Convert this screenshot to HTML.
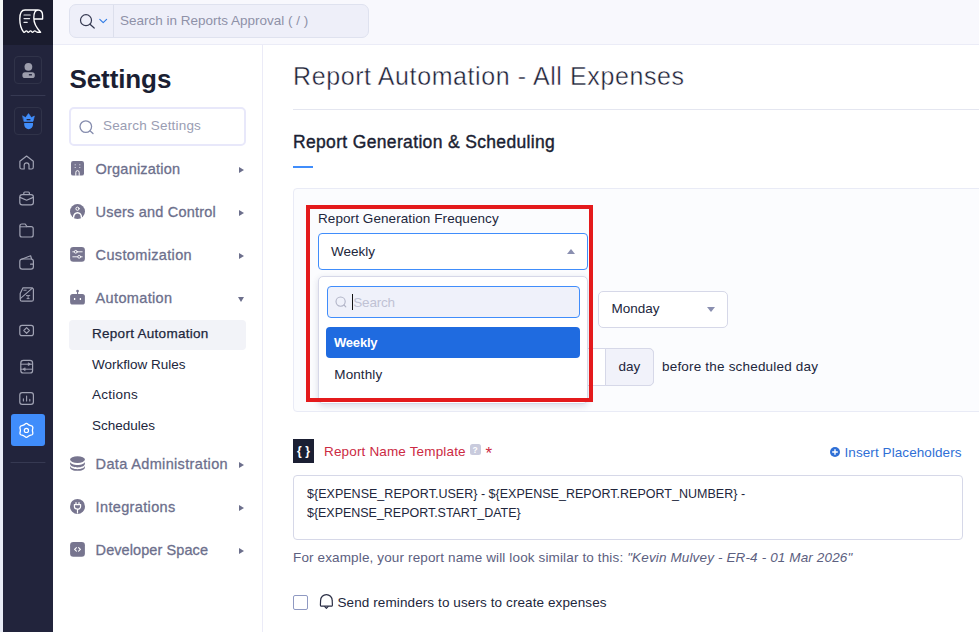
<!DOCTYPE html>
<html lang="en">
<head>
<meta charset="utf-8">
<title>Report Automation - All Expenses</title>
<style>
*{box-sizing:border-box;margin:0;padding:0}
html,body{width:979px;height:632px;overflow:hidden;background:#fff}
body{font-family:"Liberation Sans",Arial,sans-serif;color:#21263c;position:relative;font-size:13px}
.abs{position:absolute}
.t{position:absolute;white-space:nowrap;line-height:1}
#edge{left:0;top:0;width:3px;height:632px;background:#e9ecf6;border-top:20px solid #f6f9f7}
#nav{left:3px;top:0;width:50px;height:632px;background:#22243c}
#navtop{left:3px;top:0;width:50px;height:45px;background:#1a1c2e}
#topbar{left:53px;top:0;width:926px;height:45px;background:#f8f8fd;border-bottom:1px solid #ebecf7}
#gsearch{left:69px;top:4px;width:300px;height:34px;background:#eeeff9;border:1px solid #dfe2ef;border-radius:7px}
#gsearch .div{position:absolute;left:43px;top:0;width:1px;height:32px;background:#dcdfec}
#side{left:53px;top:45px;width:210px;height:587px;background:#fff;border-right:1px solid #ebebf7}
.mi{color:#6c6f8c;font-size:14.5px;font-weight:400;letter-spacing:.35px;-webkit-text-stroke:.3px #6c6f8c}
.si{color:#21263c;font-size:13.5px}
.arr{position:absolute;width:0;height:0;border-left:5px solid #6c6f8c;border-top:3.5px solid transparent;border-bottom:3.5px solid transparent}
.arrd{position:absolute;width:0;height:0;border-top:5px solid #6c6f8c;border-left:3.5px solid transparent;border-right:3.5px solid transparent}
.ico{position:absolute;width:15px;height:15px}
</style>
</head>
<body>
<div id="edge" class="abs"></div>
<div id="nav" class="abs"></div>
<div id="navtop" class="abs"></div>
<div id="topbar" class="abs"></div>
<div id="gsearch" class="abs"><div class="div"></div></div>
<div class="t" style="left:120px;top:14px;font-size:13.5px;color:#8e91a8">Search in Reports Approval ( / )</div>

<div id="side" class="abs"></div>
<div class="t" style="left:69.5px;top:66px;font-size:26px;font-weight:700;color:#1b1f33;letter-spacing:-.1px">Settings</div>
<div class="abs" style="left:69px;top:107px;width:177px;height:38.5px;border:2px solid #e8e8fa;border-radius:5px;background:#fff"></div>
<div class="t" style="left:103px;top:119px;font-size:13.5px;color:#9a9db3;letter-spacing:.18px">Search Settings</div>

<div class="t mi" style="left:95.6px;top:162px;letter-spacing:.2px">Organization</div>
<div class="t mi" style="left:95.6px;top:205px;letter-spacing:.2px">Users and Control</div>
<div class="t mi" style="left:95.6px;top:248px">Customization</div>
<div class="t mi" style="left:95.6px;top:291px">Automation</div>
<div class="abs" style="left:69px;top:320px;width:177px;height:30px;background:#f2f3f8;border-radius:4px"></div>
<div class="t si" style="left:92px;top:327px;letter-spacing:.28px;-webkit-text-stroke:.25px #21263c">Report Automation</div>
<div class="t si" style="left:92px;top:358px">Workflow Rules</div>
<div class="t si" style="left:92px;top:388px;letter-spacing:.25px">Actions</div>
<div class="t si" style="left:92px;top:419px">Schedules</div>
<div class="t mi" style="left:95.6px;top:457px">Data Administration</div>
<div class="t mi" style="left:95.6px;top:500px">Integrations</div>
<div class="t mi" style="left:95.6px;top:543px;letter-spacing:.08px">Developer Space</div>
<div class="arr" style="left:239px;top:167px"></div>
<div class="arr" style="left:239px;top:210px"></div>
<div class="arr" style="left:239px;top:253px"></div>
<div class="arrd" style="left:238px;top:297px"></div>
<div class="arr" style="left:239px;top:462px"></div>
<div class="arr" style="left:239px;top:505px"></div>
<div class="arr" style="left:239px;top:548px"></div>


<!-- NAV ICONS -->
<svg class="abs" style="left:3px;top:0" width="50" height="632" viewBox="3 0 50 632" fill="none" stroke-linecap="round" stroke-linejoin="round">
<!-- logo -->
<g stroke="#fff" stroke-width="1.4">
<path d="M38 10 H25 C21.2 10 19.8 14.5 19.8 19 C19.8 24.5 21.4 29.2 23.6 32.2 Q24.6 32.6 25.4 31.4 Q26.4 30.2 27.4 31.6 Q28.4 33 29.6 31.4 Q30.6 30.2 31.6 31.6 Q32.6 33 33.8 31.4 Q34.8 30.2 35.8 31.4 Q36.6 32.4 38 32.2 H40.6 C37 28.5 33.8 24 33.8 18 C33.8 13 35.5 10 38 10 C41 10 42.6 12.5 42.6 15.5 V19 H34.2" stroke-width="1.35"/>
<path d="M24 15H30.2M24 18.6H29.6M24 22.4H27.2" stroke-width="1.15" stroke="#e4e5ea"/>
</g>
<!-- user box -->
<rect x="14.5" y="56.5" width="27" height="27" rx="3.5" stroke="#303349" stroke-width="1"/>
<circle cx="28.4" cy="66.8" r="3.9" fill="#9c9dac" stroke="none"/>
<rect x="22.4" y="72.3" width="12.4" height="5.8" rx="2.6" fill="#9c9dac" stroke="none"/>
<rect x="28.8" y="73.9" width="3.2" height="1.7" rx=".5" fill="#2a2c44" stroke="none"/>
<path d="M11 95.5H45M11 462.5H45" stroke="#363952" stroke-width="1"/>
<!-- admin box -->
<rect x="14.5" y="107.5" width="27" height="27" rx="3.5" stroke="#303349" stroke-width="1"/>
<path d="M22.8 116 L25.6 117.6 L28.5 113.6 L31.4 117.6 L34.4 116 L33 121.4 H24.2 Z" fill="#408dfb" stroke="#408dfb" stroke-width=".6"/>
<path d="M24.2 122.9 H33 V124.6 A4.4 4.6 0 0 1 24.2 124.6 Z" fill="#408dfb" stroke="none"/>
<rect x="26.6" y="119" width="3.8" height="1.3" fill="#22243c" stroke="none"/>
<g stroke="#a1a3b4" stroke-width="1.2">
<!-- home -->
<path d="M19.9 161.2 L26.6 156 L33.3 161.2 V167.2 A1.8 1.8 0 0 1 31.5 169 H29 V165.2 A2.4 2.4 0 0 0 24.2 165.2 V169 H21.7 A1.8 1.8 0 0 1 19.9 167.2 Z"/>
<!-- briefcase -->
<rect x="19.8" y="194.6" width="13.6" height="10.2" rx="2.4"/>
<path d="M23.8 194.4 V193 A1 1 0 0 1 24.8 192 H28.4 A1 1 0 0 1 29.4 193 V194.4"/>
<path d="M20 197.4 L26.6 200.2 L33.2 197.4"/>
<!-- folder -->
<path d="M19.9 226 A2 2 0 0 1 21.9 224 H25.2 L27 226.6 H31.2 A2 2 0 0 1 33.2 228.6 V235 A2 2 0 0 1 31.2 237 H21.9 A2 2 0 0 1 19.9 235 Z"/>
<path d="M20.2 226.8 H26.6" stroke-width="1"/>
<!-- wallet -->
<rect x="19.8" y="259" width="13.6" height="10.2" rx="2.4"/>
<path d="M21.6 259.2 L30.6 255.8 L31.6 259"/>
<path d="M33.4 264.2 H30.6" />
<!-- trips -->
<path d="M23 287.8 H31.6 A1.8 1.8 0 0 1 33.4 289.6 V299.4 A1.8 1.8 0 0 1 31.6 301.2 H22 A1.8 1.8 0 0 1 20.2 299.4 V293.4 Z"/>
<path d="M20.6 298.4 L32.4 288.2" stroke-width="1.1"/>
<path d="M23.8 290.2H26.2" stroke-width="1"/>
<path d="M26.4 295.6H29.8M28.1 295.8V298.4M27 298.6H29.2" stroke-width=".9"/>
<!-- card diamond -->
<rect x="19.8" y="325.4" width="13.6" height="10.2" rx="2.2"/>
<path d="M26.6 327.6 L29.4 330.5 L26.6 333.4 L23.8 330.5 Z" stroke-width="1.1"/>
<!-- arrows -->
<rect x="20.8" y="360.4" width="11.8" height="12.6" rx="2.6"/>
<path d="M21 364.2 H32.4 M21 369.2 H32.4" stroke-width="1"/>
<path d="M28.6 363 L30.4 364.2 L28.6 365.4 Z M24.8 368 L23 369.2 L24.8 370.4 Z" fill="#a1a3b4" stroke-width=".8"/>
<!-- chart -->
<rect x="19.8" y="392.6" width="13.6" height="11.8" rx="2.4"/>
<path d="M23.4 398.8V401M26.6 396V401M29.8 399.4V401" stroke-width="1.1"/>
</g>
<!-- settings active -->
<rect x="11" y="414" width="34" height="32" rx="3" fill="#408dfb" stroke="none"/>
<path d="M26.4 423.4 C27.6 423.4 28 424.6 29.4 425.2 C30.8 425.8 32 425.4 32.6 426.6 C33.4 428 32.4 428.8 32.4 430.4 C32.4 432 33.4 432.8 32.6 434.2 C32 435.4 30.8 435 29.4 435.6 C28 436.2 27.6 437.4 26.4 437.4 C25.2 437.4 24.8 436.2 23.4 435.6 C22 435 20.8 435.4 20.2 434.2 C19.4 432.8 20.4 432 20.4 430.4 C20.4 428.8 19.4 428 20.2 426.6 C20.8 425.4 22 425.8 23.4 425.2 C24.8 424.6 25.2 423.4 26.4 423.4 Z" stroke="#fff" stroke-width="1.3"/>
<circle cx="26.4" cy="430.4" r="2.1" stroke="#fff" stroke-width="1.2"/>
</svg>

<!-- SIDE ICONS -->
<svg class="abs" style="left:60px;top:150px" width="40" height="420" viewBox="60 150 40 420">
<g fill="#77758f">
<!-- org -->
<rect x="71" y="161" width="13" height="14.6" rx="2.2"/>
<!-- users -->
<circle cx="77.5" cy="211.5" r="7.5"/>
<!-- custom -->
<rect x="70.1" y="247" width="14.8" height="14.8" rx="3.2"/>
<!-- robot -->
<rect x="70.1" y="294" width="14.8" height="10.6" rx="2.6"/>
<rect x="77" y="291" width="1.1" height="3.4"/>
<circle cx="77.55" cy="291.1" r="1.35"/>
<!-- data -->
<ellipse cx="77.5" cy="459.6" rx="7.4" ry="3.3"/>
<path d="M70.1 461.6 C70.1 466.2 84.9 466.2 84.9 461.6 V463.8 C84.9 468.6 70.1 468.6 70.1 463.8 Z"/>
<path d="M70.1 465.6 C70.1 470.4 84.9 470.4 84.9 465.6 V467.4 C84.9 472 70.1 472 70.1 467.4 Z"/>
<!-- integ -->
<circle cx="77.5" cy="506.4" r="7.5"/>
<!-- dev -->
<rect x="70.1" y="542" width="14.8" height="14.8" rx="3.2"/>
</g>
<g fill="#e6e6ee">
<rect x="74.7" y="164.3" width="1" height="1"/><rect x="79.3" y="164.3" width="1" height="1"/>
<rect x="74.7" y="167" width="1" height="1"/><rect x="79.3" y="167" width="1" height="1"/>
</g>
<g fill="none" stroke="#fff" stroke-linecap="round" stroke-linejoin="round">
<path d="M75.8 175.4 V172.6 A1.7 2 0 0 1 79.2 172.6 V175.4" stroke-width="1"/>
<circle cx="77.5" cy="208.7" r="1.6" stroke-width="1"/>
<path d="M73.6 217.2 A3.9 4.4 0 0 1 81.4 217.2" stroke-width="1.5"/>
<path d="M72.8 251.8H82.2M72.8 256.8H82.2" stroke-width=".9"/>
<circle cx="75.8" cy="251.8" r="1.4" fill="#77758f" stroke-width=".9"/>
<circle cx="79.2" cy="256.8" r="1.4" fill="#77758f" stroke-width=".9"/>
<path d="M74.6 298V300M80.4 298V300" stroke-width="1.3" stroke-linecap="butt"/>
<path d="M74.4 504.6 H80.6 V506.6 A3.1 2.6 0 0 1 74.4 506.6 Z M76 504.4V502.6 M79 504.4V502.6 M77.5 509.4V513" stroke-width="1.2"/>
<path d="M76.4 547.6L74.6 549.4L76.4 551.2M78.6 547.6L80.4 549.4L78.6 551.2" stroke-width="1.1"/>
</g>
</svg>
<!-- MAIN -->
<div class="t" style="left:293px;top:64px;font-size:25px;color:#1d2137;letter-spacing:.6px;-webkit-text-stroke:.42px #fff">Report Automation - All Expenses</div>
<div class="abs" style="left:293px;top:109px;width:686px;height:1px;background:#e4e6f0"></div>
<div class="t" style="left:293px;top:134px;font-size:17.5px;color:#1b1f33;-webkit-text-stroke:.4px #1b1f33;letter-spacing:.34px">Report Generation &amp; Scheduling</div>
<div class="abs" style="left:293px;top:166px;width:20px;height:2px;background:#408dfb"></div>

<div class="abs" style="left:293px;top:188px;width:700px;height:224px;background:#fbfcfe;border:1px solid #e9ebf6;border-radius:4px"></div>
<div class="t" style="left:318px;top:211.5px;font-size:13.5px;color:#21263c;letter-spacing:.08px">Report Generation Frequency</div>
<div class="abs" style="left:318px;top:233px;width:270px;height:37px;border:1px solid #408dfb;border-radius:4px;background:#fff"></div>
<div class="t" style="left:331px;top:245px;font-size:13.5px">Weekly</div>
<div class="abs" style="left:567px;top:249px;width:0;height:0;border-bottom:5px solid #8a8fb0;border-left:4px solid transparent;border-right:4px solid transparent"></div>

<div class="abs" style="left:560px;top:348px;width:94px;height:38px;border:1px solid #d6d8e8;border-radius:5px;background:#fff"></div>
<div class="abs" style="left:318px;top:276px;width:270px;height:128px;border:1px solid #d6d8e8;border-radius:5px;background:#fff;box-shadow:0 2px 6px rgba(50,55,110,.16)"></div>
<div class="abs" style="left:327px;top:286px;width:253px;height:32px;border:1px solid #408dfb;border-radius:4px;background:#eff1fa"></div>
<div class="abs" style="left:352px;top:294px;width:1px;height:16px;background:#111"></div>
<div class="t" style="left:353.3px;top:296px;font-size:13.5px;color:#c0c2d4;letter-spacing:-.2px">Search</div>
<div class="abs" style="left:326px;top:327px;width:254px;height:31px;background:#1f6be0;border-radius:4px"></div>
<div class="t" style="left:334px;top:335.5px;font-size:13px;color:#fff;font-weight:700;letter-spacing:-.2px">Weekly</div>
<div class="t" style="left:334.3px;top:368px;font-size:13.5px;color:#21263c;letter-spacing:.1px">Monthly</div>

<div class="abs" style="left:598px;top:291px;width:130px;height:37px;border:1px solid #d6d8e8;border-radius:5px;background:#fff"></div>
<div class="t" style="left:611.5px;top:302px;font-size:13.5px">Monday</div>
<div class="abs" style="left:707px;top:307px;width:0;height:0;border-top:5px solid #8a8fb0;border-left:4px solid transparent;border-right:4px solid transparent"></div>

<div class="abs" style="left:605px;top:348px;width:49px;height:38px;border:1px solid #d6d8e8;border-radius:0 5px 5px 0;background:#f1f2fa"></div>
<div class="t" style="left:618.5px;top:360px;font-size:13.5px">day</div>
<div class="t" style="left:662px;top:360px;font-size:13.5px;letter-spacing:.19px">before the scheduled day</div>

<div class="abs" style="left:306px;top:205px;width:287px;height:197px;border:4px solid #e41a1c"></div>

<div class="abs" style="left:293px;top:439px;width:21px;height:24px;background:#1b1f33"></div>
<div class="t" style="left:297px;top:445px;font-size:12px;color:#fff;font-weight:700;letter-spacing:3.6px">{}</div>
<div class="t" style="left:324px;top:444.5px;font-size:13.5px;color:#cc2a43;letter-spacing:.16px">Report Name Template</div>
<div class="abs" style="left:469.5px;top:444px;width:11.2px;height:11px;background:#c9cbdd;border-radius:2.5px"></div>
<div class="t" style="left:472.6px;top:445.5px;font-size:8.5px;color:#fff;font-weight:700">?</div>
<div class="t" style="left:485.5px;top:444.5px;font-size:17px;color:#cc2a43">*</div>
<div class="abs" style="left:830px;top:447px;width:10px;height:10px;border-radius:50%;background:#2f6fd6"></div>
<div class="t" style="left:844.5px;top:445.5px;font-size:13.5px;color:#2f6fd6;letter-spacing:.08px">Insert Placeholders</div>

<div class="abs" style="left:293px;top:475px;width:670px;height:65px;border:1px solid #d6d8e8;border-radius:4px;background:#fff"></div>
<div class="t" style="left:307px;top:487.5px;font-size:12.5px;letter-spacing:.02px;color:#21263c">${EXPENSE_REPORT.USER} - ${EXPENSE_REPORT.REPORT_NUMBER} -</div>
<div class="t" style="left:307px;top:506.5px;font-size:12.5px;letter-spacing:-.03px;color:#21263c">${EXPENSE_REPORT.START_DATE}</div>
<div class="t" style="left:293px;top:550.5px;font-size:13.5px;color:#5c6080;letter-spacing:.137px">For example, your report name will look similar to this: <i>"Kevin Mulvey - ER-4 - 01 Mar 2026"</i></div>

<div class="abs" style="left:293px;top:595px;width:15px;height:15px;border:1px solid #8f99c2;border-radius:2px;background:#fff"></div>
<div class="t" style="left:337.5px;top:595.5px;font-size:13.5px;color:#21263c;letter-spacing:.1px">Send reminders to users to create expenses</div>

<!-- search icons -->
<svg class="abs" style="left:75px;top:10px" width="36" height="24" viewBox="75 10 36 24" fill="none" stroke-linecap="round" stroke-linejoin="round">
<circle cx="86" cy="20.2" r="5.5" stroke="#343850" stroke-width="1.2"/>
<path d="M90 24.2L94.2 28" stroke="#343850" stroke-width="1.2"/>
<path d="M99.8 19.4L103.2 22.6L106.6 19.4" stroke="#2f7be5" stroke-width="1.15"/>
</svg>
<svg class="abs" style="left:78px;top:118px" width="18" height="18" viewBox="78 118 18 18" fill="none" stroke-linecap="round">
<circle cx="85.8" cy="126.6" r="5.8" stroke="#868dae" stroke-width="1.3"/>
<path d="M90.2 131L93 133.6" stroke="#868dae" stroke-width="1.3"/>
</svg>
<svg class="abs" style="left:333px;top:294px" width="16" height="16" viewBox="333 294 16 16" fill="none" stroke-linecap="round">
<circle cx="340.6" cy="301.6" r="4.6" stroke="#b0b3c6" stroke-width="1.1"/>
<path d="M344 305L345.8 306.8" stroke="#b0b3c6" stroke-width="1.1"/>
</svg>
<!-- bell -->
<svg class="abs" style="left:317px;top:590px" width="18" height="22" viewBox="317 590 18 22" fill="none" stroke-linecap="round" stroke-linejoin="round">
<path d="M321.6 606.2 Q320.3 606.2 320.4 604.8 L320.6 600.4 A5.8 5.8 0 0 1 332.2 600.4 L332.4 604.8 Q332.5 606.2 331.2 606.2 Z" stroke="#2a2e45" stroke-width="1.2"/>
<path d="M324.7 606.6 L326.4 608.3 L328.1 606.6" stroke="#2a2e45" stroke-width="1.1"/>
</svg>
<!-- plus in insert -->
<svg class="abs" style="left:829px;top:446px" width="12" height="12" viewBox="0 0 12 12"><path d="M3.7 6H8.3M6 3.7V8.3" stroke="#fff" stroke-width="1.4" stroke-linecap="round"/></svg>
</body>
</html>
